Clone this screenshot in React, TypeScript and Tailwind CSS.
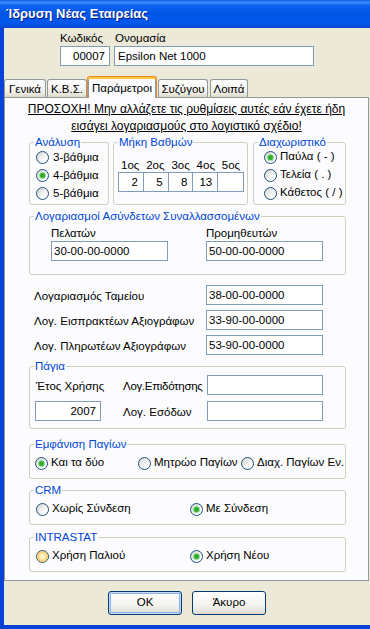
import type { ReactNode } from "react";

function Field({ value = "", className = "" }: { value?: string; className?: string }) {
  return (
    <div
      className={`h-[20px] overflow-hidden whitespace-nowrap border border-[#7f9db9] bg-white px-[2px] leading-[18px] ${className}`}
    >
      {value}
    </div>
  );
}

function RadioOpt({
  label,
  checked = false,
  hot = false,
  className = "",
}: {
  label: string;
  checked?: boolean;
  hot?: boolean;
  className?: string;
}) {
  return (
    <div className={`flex items-center gap-[3px] whitespace-nowrap ${className}`}>
      <span className="flex h-[13px] w-[13px] shrink-0 items-center justify-center rounded-full border border-[#1c5180] bg-[linear-gradient(135deg,#d4d4ce,#ffffff_75%)]">
        {hot && (
          <span className="flex h-[11px] w-[11px] items-center justify-center rounded-full bg-[radial-gradient(circle,#fff3c8_25%,#f9c455_70%,#e9a235)]" />
        )}
        {checked && <span className="h-[5px] w-[5px] rounded-full bg-[#2fae2c] shadow-[0_0_0_1px_#9bdc98]" />}
      </span>
      <span>{label}</span>
    </div>
  );
}

function Group({ title, className = "", children }: { title: string; className?: string; children?: ReactNode }) {
  return (
    <fieldset className={`rounded-[3px] border border-[#d0d0bf] ${className}`}>
      <legend className="ml-[4px] px-px leading-[14px] text-[#0046d5]">{title}</legend>
      {children}
    </fieldset>
  );
}

function Tab({ label, className = "" }: { label: string; className?: string }) {
  return (
    <div
      className={`mb-px flex h-[18px] items-center justify-center rounded-t-[3px] border border-b-0 border-[#919b9c] bg-[linear-gradient(180deg,#ffffff,#efeee9_75%,#dcd8c8)] leading-[14px] ${className}`}
    >
      {label}
    </div>
  );
}

export default function App() {
  return (
    <div className="flex h-[629px] w-[370px] flex-col overflow-hidden bg-[#0842d6] font-['Liberation_Sans',Arial,sans-serif] text-[11.5px] text-black">
      <div className="flex h-[28px] shrink-0 items-center bg-[linear-gradient(180deg,#0a5fe8_0%,#3d8eff_8%,#0b62f0_20%,#0055e5_50%,#0058ee_80%,#0a4bd0_100%)] pl-[6px] text-[13px] font-bold text-white [text-shadow:1px_1px_0_#0a1883]">
        Ίδρυση Νέας Εταιρείας
      </div>

      <div className="mb-[4px] ml-[4px] flex flex-1 flex-col bg-[#ece9d8]">
        <div className="flex gap-[4px] pl-[56px] pt-[3px]">
          <div className="flex w-[50px] flex-col">
            <span className="h-[14px] leading-[14px]">Κωδικός</span>
            <Field value="00007" className="mt-[1px] pr-[4px] text-right" />
          </div>
          <div className="flex w-[200px] flex-col">
            <span className="h-[14px] pl-px leading-[14px]">Ονομασία</span>
            <Field value="Epsilon Net 1000" className="mt-[1px] pl-[3px]" />
          </div>
        </div>

        <div className="relative z-10 -mb-px mt-[10px] flex h-[22px] items-end">
          <Tab label="Γενικά" className="w-[42px]" />
          <Tab label="Κ.Β.Σ." className="ml-[1px] w-[40px]" />
          <div className="flex h-[22px] w-[70px] items-center justify-center rounded-t-[3px] border border-b-0 border-[#e68b2c] bg-[#fcfcfe] leading-[14px] shadow-[inset_0_2px_0_#ffc83c,inset_1px_0_0_#919b9c,inset_-1px_0_0_#919b9c]">
            Παράμετροι
          </div>
          <Tab label="Συζύγου" className="ml-[1px] w-[50px]" />
          <Tab label="Λοιπά" className="ml-[2px] w-[38px]" />
        </div>

        <div className="mr-px flex h-[484px] flex-col border border-[#919b9c] bg-[#fcfcfe]">
          <p className="pt-[3px] text-center text-[12px] leading-[17px] underline">
            ΠΡΟΣΟΧΗ! Μην αλλάζετε τις ρυθμίσεις αυτές εάν έχετε ήδη
            <br />
            εισάγει λογαριασμούς στο λογιστικό σχέδιο!
          </p>

          <div className="ml-[24px] flex w-[317px]">
            <Group title="Ανάλυση" className="h-[70px] w-[80px]">
              <div className="-mt-px flex flex-col pl-[6px] leading-[18px]">
                <RadioOpt label="3-βάθμια" className="h-[18px] gap-[4px]" />
                <RadioOpt label="4-βάθμια" checked className="h-[18px] gap-[4px]" />
                <RadioOpt label="5-βάθμια" className="h-[18px] gap-[4px]" />
              </div>
            </Group>
            <Group title="Μήκη Βαθμών" className="ml-[4px] h-[70px] w-[135px]">
              <div className="pl-[4px] pt-[9px]">
                <div className="grid h-[14px] w-[126px] grid-cols-5 leading-[14px]">
                  <span className="pl-[3px]">1ος</span>
                  <span className="pl-[3px]">2ος</span>
                  <span className="pl-[3px]">3ος</span>
                  <span className="pl-[3px]">4ος</span>
                  <span className="pl-[3px]">5ος</span>
                </div>
                <div className="grid h-[20px] w-[126px] grid-cols-5 divide-x divide-[#7f9db9] border border-[#7f9db9] bg-white leading-[18px]">
                  <span className="pr-[5px] text-right">2</span>
                  <span className="pr-[5px] text-right">5</span>
                  <span className="pr-[5px] text-right">8</span>
                  <span className="pr-[5px] text-right">13</span>
                  <span className="pr-[5px] text-right"></span>
                </div>
              </div>
            </Group>
            <Group title="Διαχωριστικό" className="ml-[5px] h-[70px] w-[93px]">
              <div className="-mt-px flex flex-col pl-[10px]">
                <RadioOpt label="Παύλα ( - )" checked className="h-[18px] gap-[2px]" />
                <RadioOpt label="Τελεία ( . )" className="h-[18px] gap-[2px]" />
                <RadioOpt label="Κάθετος ( / )" className="h-[18px] gap-[2px]" />
              </div>
            </Group>
          </div>

          <Group title="Λογαριασμοί Ασύνδετων Συναλλασσομένων" className="ml-[24px] mt-[4px] h-[66px] w-[317px]">
            <div className="flex gap-[38px] pl-[21px] pt-[3px]">
              <div className="flex w-[117px] flex-col">
                <span className="h-[14px] leading-[14px]">Πελατών</span>
                <Field value="30-00-00-0000" className="mt-[1px]" />
              </div>
              <div className="flex w-[117px] flex-col">
                <span className="h-[14px] leading-[14px]">Προμηθευτών</span>
                <Field value="50-00-00-0000" className="mt-[1px]" />
              </div>
            </div>
          </Group>

          <div className="ml-[29px] mt-[10px] flex flex-col gap-[5px]">
            <div className="flex h-[20px]">
              <span className="w-[172px] pt-[4px] leading-[14px]">Λογαριασμός Ταμείου</span>
              <Field value="38-00-00-0000" className="w-[117px]" />
            </div>
            <div className="flex h-[20px]">
              <span className="w-[172px] pt-[4px] leading-[14px]">Λογ. Εισπρακτέων Αξιογράφων</span>
              <Field value="33-90-00-0000" className="w-[117px]" />
            </div>
            <div className="flex h-[20px]">
              <span className="w-[172px] pt-[4px] leading-[14px]">Λογ. Πληρωτέων Αξιογράφων</span>
              <Field value="53-90-00-0000" className="w-[117px]" />
            </div>
          </div>

          <Group title="Πάγια" className="ml-[24px] mt-[4px] h-[70px] w-[317px]">
            <div className="mt-[2px] flex h-[20px] pl-[6px] leading-[14px]">
              <span className="w-[87px] pt-[4px]">Έτος Χρήσης</span>
              <span className="w-[84px] whitespace-nowrap pt-[4px] tracking-[-0.3px]">Λογ.Επιδότησης</span>
              <Field className="w-[116px]" />
            </div>
            <div className="mt-[6px] flex h-[20px] pl-[5px] leading-[14px]">
              <Field value="2007" className="w-[66px] pr-[4px] text-right leading-[18px]" />
              <span className="ml-[22px] w-[84px] pt-[4px]">Λογ. Εσόδων</span>
              <Field className="w-[116px] leading-[18px]" />
            </div>
          </Group>

          <Group title="Εμφάνιση Παγίων" className="ml-[24px] mt-[8px] h-[42px] w-[317px]">
            <div className="mt-[4px] flex h-[16px] items-center pl-[5px]">
              <RadioOpt label="Και τα δύο" checked className="w-[103px] gap-[2px]" />
              <RadioOpt label="Μητρώο Παγίων" className="w-[103px] gap-[2px]" />
              <RadioOpt label="Διαχ. Παγίων Εν." className="gap-[2px]" />
            </div>
          </Group>

          <Group title="CRM" className="ml-[24px] mt-[4px] h-[42px] w-[317px]">
            <div className="mt-[4px] flex h-[16px] items-center pl-[6px]">
              <RadioOpt label="Χωρίς Σύνδεση" className="w-[154px] gap-[2px]" />
              <RadioOpt label="Με Σύνδεση" checked className="gap-[2px]" />
            </div>
          </Group>

          <Group title="INTRASTAT" className="ml-[24px] mt-[5px] h-[42px] w-[317px]">
            <div className="mt-[4px] flex h-[16px] items-center pl-[6px]">
              <RadioOpt label="Χρήση Παλιού" hot className="w-[154px] gap-[2px]" />
              <RadioOpt label="Χρήση Νέου" checked className="gap-[2px]" />
            </div>
          </Group>
        </div>

        <div className="mt-[10px] flex justify-center gap-[10px]">
          <button className="h-[24px] w-[74px] rounded-[3px] border border-[#003c74] bg-[linear-gradient(180deg,#ffffff,#f3f3ef_60%,#dedbd0)] shadow-[inset_0_0_0_1px_#c6dafa,inset_0_0_0_2px_#8eb0ee]">
            OK
          </button>
          <button className="h-[24px] w-[74px] rounded-[3px] border border-[#003c74] bg-[linear-gradient(180deg,#ffffff,#f3f3ef_60%,#dedbd0)]">
            Άκυρο
          </button>
        </div>
      </div>
    </div>
  );
}
